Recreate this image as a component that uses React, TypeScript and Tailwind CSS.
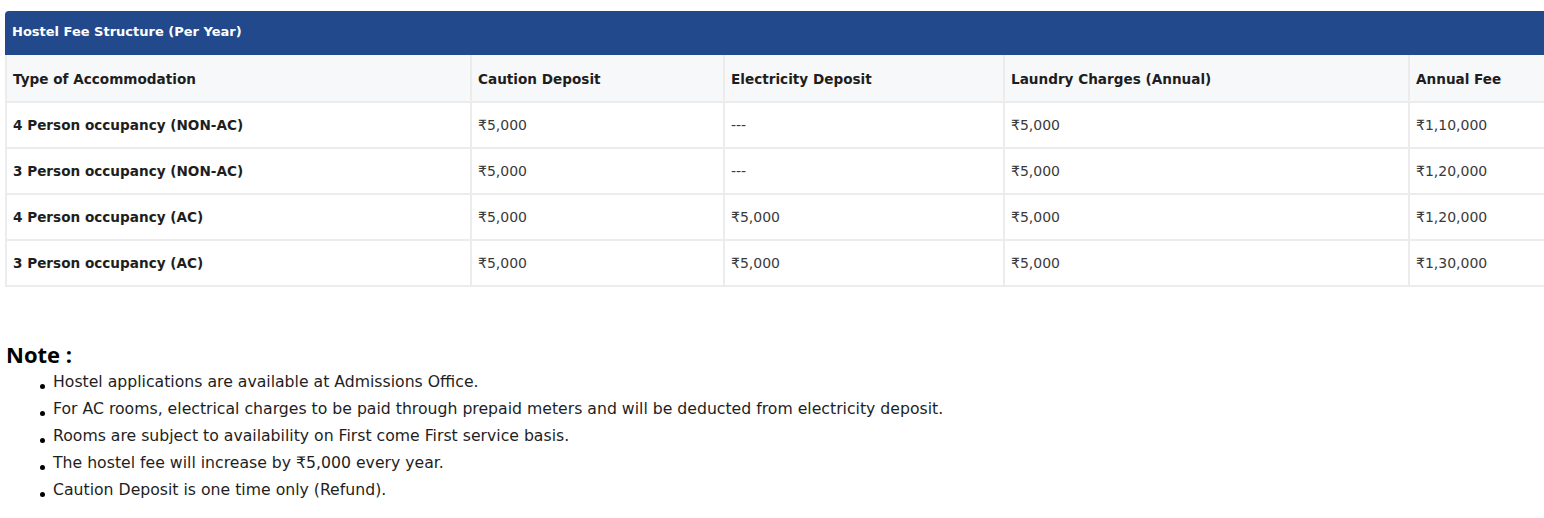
import React from "react";

const rows = [
  ["4 Person occupancy (NON-AC)", "₹5,000", "---", "₹5,000", "₹1,10,000"],
  ["3 Person occupancy (NON-AC)", "₹5,000", "---", "₹5,000", "₹1,20,000"],
  ["4 Person occupancy (AC)", "₹5,000", "₹5,000", "₹5,000", "₹1,20,000"],
  ["3 Person occupancy (AC)", "₹5,000", "₹5,000", "₹5,000", "₹1,30,000"],
];

const notes = [
  "Hostel applications are available at Admissions Office.",
  "For AC rooms, electrical charges to be paid through prepaid meters and will be deducted from electricity deposit.",
  "Rooms are subject to availability on First come First service basis.",
  "The hostel fee will increase by ₹5,000 every year.",
  "Caution Deposit is one time only (Refund).",
];

const widths = ["w-[465px]", "w-[253px]", "w-[280px]", "w-[405px]", "w-[200px]"];

export default function App() {
  return (
    <div className="w-[1544px] h-[518px] overflow-hidden bg-white font-['DejaVu_Sans',sans-serif] text-[#222]">
      <div className="pt-[11px] pl-[5px]">
        <div className="w-[1603px]">
          <div className="h-[44px] bg-[#22498b] rounded-tl-[4px] flex items-center pl-[7px] pb-[2px] text-white text-[13px] font-bold">
            Hostel Fee Structure (Per Year)
          </div>
          <table className="border-collapse table-fixed w-[1603px]">
            <thead>
              <tr className="bg-[#f7f8fa] h-[47px]">
                {["Type of Accommodation", "Caution Deposit", "Electricity Deposit", "Laundry Charges (Annual)", "Annual Fee"].map((h, i) => (
                  <th
                    key={h}
                    className={`${widths[i]} border-2 border-[#ececec] border-t-0 text-left font-bold text-[13.6px] text-[#1e1e1e] pl-[6px] pt-[3px] align-middle`}
                  >
                    {h}
                  </th>
                ))}
              </tr>
            </thead>
            <tbody>
              {rows.map((r, ri) => (
                <tr key={ri} className="h-[46px]">
                  {r.map((c, ci) => (
                    <td
                      key={ci}
                      className={`border-2 border-[#ececec] pl-[6px] align-middle ${ci === 0 ? "font-bold text-[13.6px] text-[#1e1e1e]" : "text-[14px] text-[#3a3a3a]"}`}
                    >
                      {c}
                    </td>
                  ))}
                </tr>
              ))}
            </tbody>
          </table>
        </div>
      </div>
      <div className="pl-[6px] pt-[53px]">
        <div className="font-['Open_Sans',sans-serif] text-[22px] font-bold leading-[28px] text-black">Note :</div>
        <ul className="pl-[34px]">
          {notes.map((n) => (
            <li key={n} className="flex items-center h-[27px] text-[15.7px] text-[#1e1e1e]">
              <span className="w-[5px] h-[5px] rounded-full bg-black mr-[8px] mt-[10px]" />
              {n}
            </li>
          ))}
        </ul>
      </div>
    </div>
  );
}
